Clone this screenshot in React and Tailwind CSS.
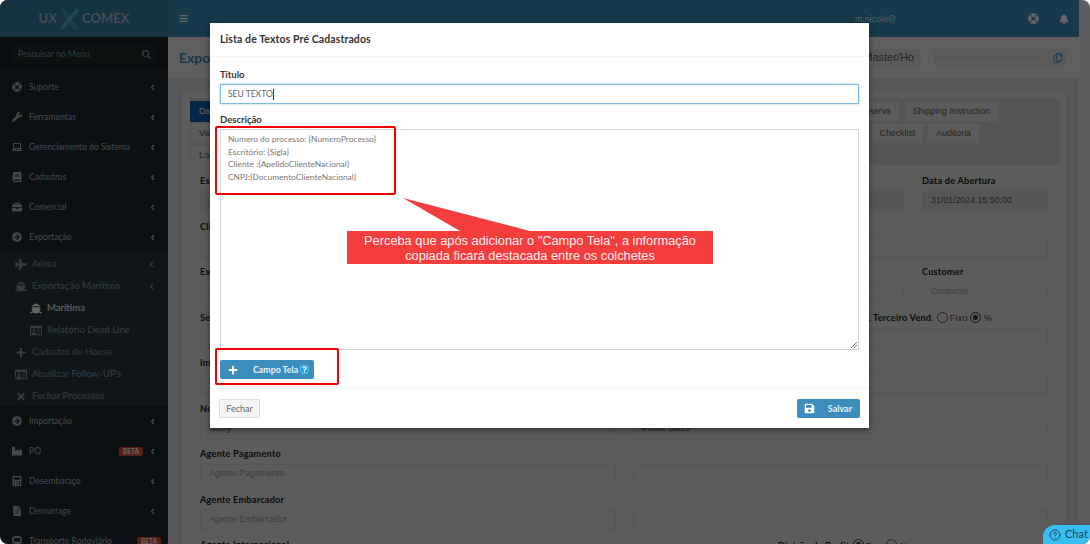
import { FaLifeRing, FaWrench, FaLaptop, FaBook, FaBriefcase, FaArrowCircleRight, FaPlane, FaShip, FaRegIdCard, FaPlus, FaTimes, FaIndustry, FaCalculator, FaFileAlt, FaBus, FaAngleLeft, FaSearch, FaBars, FaBell, FaSave, FaRegCopy, FaQuestionCircle } from 'react-icons/fa';
import { CircleHelp } from 'lucide-react';

const topMenu = [
    { label: 'Suporte', icon: FaLifeRing },
    { label: 'Ferramentas', icon: FaWrench },
    { label: 'Gerenciamento do Sistema', icon: FaLaptop },
    { label: 'Cadastros', icon: FaBook },
    { label: 'Comercial', icon: FaBriefcase },
    { label: 'Exportação', icon: FaArrowCircleRight },
];

const bottomMenu = [
    { label: 'Importação', icon: FaArrowCircleRight },
    { label: 'PO', icon: FaIndustry, beta: true },
    { label: 'Desembaraço', icon: FaCalculator },
    { label: 'Demurrage', icon: FaFileAlt },
    { label: 'Transporte Rodoviário', icon: FaBus, beta: true, noArrow: true },
];

const subMenu = [
    { label: 'Aérea', icon: FaPlane, arrow: true },
    { label: 'Exportação Marítima', icon: FaShip, arrow: true },
    { label: 'Marítima', icon: FaShip, nested: true, active: true },
    { label: 'Relatório Dead Line', icon: FaRegIdCard, nested: true },
    { label: 'Cadastro de House', icon: FaPlus },
    { label: "Atualizar Follow-UP's", icon: FaRegIdCard },
    { label: 'Fechar Processos', icon: FaTimes },
];

function MenuItem({ item }) {
    const Icon = item.icon;
    return (
        <div className="flex h-[30px] shrink-0 items-center pl-[12px] pr-[11px] text-[8.6px] whitespace-nowrap text-[#a8b6bd]">
            <Icon className="w-[10px] text-[10px]" />
            <span className="ml-[7px]">{item.label}</span>
            {item.beta && (
                <span className={`ml-auto rounded-[2px] bg-[#dd4b39] px-[4px] text-[6.5px] leading-[9px] font-bold text-white ${item.noArrow ? '-mr-[4px]' : 'mr-[5px]'}`}>BETA</span>
            )}
            {!item.noArrow && <FaAngleLeft className={`text-[9px] ${item.beta ? '' : 'ml-auto'}`} />}
        </div>
    );
}

function SubItem({ item }) {
    const Icon = item.icon;
    return (
        <div className={`flex h-[22px] shrink-0 items-center pr-[12px] text-[9.6px] whitespace-nowrap ${item.nested ? 'pl-[30px]' : 'pl-[15px]'} ${item.active ? 'text-white' : 'text-[#7f98a3]'}`}>
            <Icon className="w-[12px] text-[11px]" />
            <span className="ml-[5px]">{item.label}</span>
            {item.arrow && <FaAngleLeft className="ml-auto text-[9px]" />}
        </div>
    );
}

function Sidebar() {
    return (
        <aside className="flex w-[168px] shrink-0 flex-col bg-[#20292e]">
            <div className="flex h-[37px] shrink-0 items-center justify-center bg-[#367fa9] text-[13px] font-bold text-[#a5c0d0]">
                <span>UX</span>
                <svg width="25" height="22" viewBox="0 0 25 22">
                    <path d="M2 1h6l15 20h-6z" fill="#3fa0b8" />
                    <path d="M23 1h-4L2 21h5z" fill="#4fb8c8" />
                </svg>
                <span>COMEX</span>
            </div>
            <div className="flex h-[33px] shrink-0 items-center bg-[#1a2226] px-[10px] pt-[2px]">
                <div className="flex h-[18px] w-full items-center justify-between rounded-[2px] bg-[#1e282c] pl-[8px] pr-[7px] text-[8.6px] text-[#7f98a3]">
                    Pesquisar no Menu
                    <FaSearch className="text-[9px]" />
                </div>
            </div>
            <div className="flex flex-col pt-[2px]">
                {topMenu.map((item) => <MenuItem key={item.label} item={item} />)}
            </div>
            <div className="flex h-[154px] shrink-0 flex-col overflow-hidden bg-[#2a373d] pt-[1px]">
                {subMenu.map((item) => <SubItem key={item.label} item={item} />)}
            </div>
            <div className="flex flex-col">
                {bottomMenu.map((item) => <MenuItem key={item.label} item={item} />)}
            </div>
        </aside>
    );
}

function Field({ label, value, placeholder, disabled, labelExtra }) {
    return (
        <div className="flex h-[45.5px] min-w-0 flex-col">
            <div className="flex h-[15px] items-start whitespace-nowrap text-[9.2px] leading-[10px] font-bold tracking-[0.2px] text-[#222]">
                {labelExtra || label}
            </div>
            <div className={`flex h-[20px] items-center border border-[#d2d6de] px-[8px] text-[8.8px] font-['Liberation_Sans',sans-serif] ${disabled ? 'bg-[#d8d8d8]' : ''} ${value ? 'text-[#555]' : 'text-[#999]'}`}>
                {value || placeholder}
            </div>
        </div>
    );
}

function Radio({ checked }) {
    return (
        <span className={`h-[11px] w-[11px] shrink-0 -translate-y-[1px] rounded-full border ${checked ? 'border-[#333] p-[2px]' : 'border-[#555]'}`}>
            {checked && <span className="block h-full w-full rounded-full bg-[#333]" />}
        </span>
    );
}

function RadioLabel({ first, second, checked }) {
    return (
        <span className="ml-[3px] inline-flex items-center font-normal font-['Liberation_Sans',sans-serif] text-[#444]">
            <Radio checked={checked === 'first'} />
            <span className="ml-[2px] mr-[2px]">{first}</span>
            <Radio checked={checked === 'second'} />
            <span className="ml-[3px]">{second}</span>
        </span>
    );
}

function Tab({ children, active }) {
    return (
        <div className={`flex h-[21px] items-center border px-[8px] font-['Liberation_Sans',sans-serif] text-[8.8px] ${active ? 'border-[#0a5fb4] bg-[#0a5fb4] text-white' : 'border-[#d8d8d8] bg-[#e6e6e6] text-[#555]'}`}>
            {children}
        </div>
    );
}

function MainPage() {
    return (
        <div className="flex min-w-0 flex-1 flex-col">
            <header className="flex h-[37px] shrink-0 items-center bg-[#3c8dbc] pl-[11px] text-white">
                <FaBars className="text-[9px]" />
                <span className="ml-[667px] text-[9px] text-[#d5e6f0]">m.nicole@</span>
                <FaLifeRing className="ml-[133px] text-[11px]" />
                <FaBell className="ml-[20px] text-[10px]" />
            </header>
            <div className="flex h-[41px] shrink-0 items-center bg-[#eeeeee] pl-[11px]">
                <h1 className="text-[14px] font-bold text-[#3c8dbc]">Exportação Marítima</h1>
                <div className="ml-auto flex h-[18px] w-[62px] items-center justify-end bg-[#e2e2e2] pr-[7px] text-[11px] whitespace-nowrap text-[#555] font-['Liberation_Sans',sans-serif]">Master/Ho</div>
                <div className="ml-[12px] mr-[12px] flex h-[18px] w-[134px] items-center justify-between bg-[#e2e2e2] pl-[3px] pr-[4px]">
                    <div className="h-[2px] w-[108px] translate-y-[4px] bg-[#ededed]" />
                    <FaRegCopy className="text-[10px] text-[#3c8dbc]" />
                </div>
            </div>
            <div className="min-h-0 flex-1 bg-[#d8dcdf] pl-[12px] pr-[12px] pt-[12px]">
                <div className="h-[500px] border border-[#d2d2d2] bg-[#e6e6e6] pl-[9px] pr-[6px] pt-[7px]">
                    <div className="flex h-[67px] flex-col rounded-[2px] bg-[#d5d5d5] pt-[3px]">
                        <div className="flex justify-between pr-[61px]">
                            <Tab active>Dados Gerais</Tab>
                            <div className="flex gap-[4px]"><Tab>Reserva</Tab><Tab>Shipping Instruction</Tab></div>
                        </div>
                        <div className="mt-[1px] flex justify-between pr-[80px]">
                            <Tab>Valores</Tab>
                            <div className="flex gap-[3px]"><Tab>Checklist</Tab><Tab>Auditoria</Tab></div>
                        </div>
                        <div className="mt-[1px] flex"><Tab>Logs</Tab></div>
                    </div>
                    <div className="grid grid-cols-[416px_415px] gap-x-[17px] pl-[10px] pt-[11px]">
                        <div className="flex flex-col">
                            <Field label="Escritório" disabled />
                            <Field label="Cliente" placeholder="Cliente" />
                            <Field label="Exportador" placeholder="Exportador" />
                            <Field label="Serviço" placeholder="Serviço" />
                            <Field label="Importador" placeholder="Importador" />
                            <Field label="Notify" value="Notify" />
                            <Field label="Agente Pagamento" placeholder="Agente Pagamento" />
                            <Field label="Agente Embarcador" placeholder="Agente Embarcador" />
                            <Field label="Agente Internacional" placeholder="Agente Internacional" />
                        </div>
                        <div className="flex flex-col">
                            <div className="grid grid-cols-[271px_126px] gap-x-[18px]">
                                <Field label="Situação" disabled />
                                <Field label="Data de Abertura" value="31/01/2024 15:50:00" disabled />
                            </div>
                            <Field placeholder=" " />
                            <div className="grid grid-cols-[271px_126px] gap-x-[18px]">
                                <Field placeholder=" " />
                                <Field label="Customer" placeholder="Customer" />
                            </div>
                            <Field
                                value="0,00"
                                labelExtra={<span className="flex items-center pl-[216px]">Com. Terceiro Vend.<RadioLabel first="Fixo" second="%" checked="second" /></span>}
                            />
                            <Field placeholder=" " />
                            <Field value="Inside Sales" />
                            <Field placeholder=" " />
                            <Field placeholder=" " />
                            <Field
                                placeholder=" "
                                labelExtra={<span className="flex items-center pl-[145px]">Divisão de Profit<RadioLabel first="Fixo" second="%" checked="first" /></span>}
                            />
                        </div>
                    </div>
                </div>
            </div>
        </div>
    );
}

function Modal() {
    return (
        <div className="absolute left-[210px] top-[23px] flex h-[405px] w-[659px] flex-col bg-white text-[#333] shadow-[0_2px_6px_rgba(0,0,0,0.5)]">
            <div className="flex h-[34px] shrink-0 items-center border-b border-[#f4f4f4] pl-[10px] pt-[1px] text-[10.5px] font-bold tracking-[0.1px]">
                Lista de Textos Pré Cadastrados
            </div>
            <div className="flex flex-1 flex-col px-[10px] pt-[10px]">
                <label className="mb-[2px] h-[15px] text-[9.5px] leading-[15px] font-bold">Título</label>
                <div className="flex h-[20px] items-center border border-[#7fb8d8] px-[7px] text-[8.5px] text-[#666] shadow-[0_0_2px_rgba(60,141,188,0.5)]">
                    SEU TEXTO<span className="h-[11px] w-px bg-[#333]" />
                </div>
                <label className="mb-[2px] mt-[8px] h-[15px] text-[9.5px] leading-[15px] font-bold">Descrição</label>
                <div className="relative h-[221px] border border-[#d2d6de] px-[7px] pt-[3px] text-[8.4px] leading-[12.6px] text-[#777]">
                    <p>Numero do processo: {'{NumeroProcesso}'}</p>
                    <p>Escritório: {'{Sigla}'}</p>
                    <p>Cliente :{'{ApelidoClienteNacional}'}</p>
                    <p>CNPJ:{'{DocumentoClienteNacional}'}</p>
                    <svg width="6" height="6" viewBox="0 0 6 6" className="absolute bottom-[1px] right-[1px]">
                        <path d="M0 6L6 0M3 6L6 3" stroke="#555" strokeWidth="0.8" />
                    </svg>
                </div>
                <div className="mt-[10px] flex h-[19px] w-[94px] items-center rounded-[2px] bg-[#3c8dbc] pl-[8px] text-[8.8px] font-bold text-[#e6f2f8]">
                    <FaPlus className="text-[10px] text-white" />
                    <span className="ml-[15px]">Campo Tela</span>
                    <span className="ml-[2px] flex h-[9px] w-[9px] items-center justify-center rounded-full bg-white">
                        <FaQuestionCircle className="text-[9px] text-[#12a8f0]" />
                    </span>
                </div>
            </div>
            <div className="flex h-[40px] shrink-0 items-center justify-between border-t border-[#f4f4f4] pl-[9px] pr-[9px]">
                <button className="flex h-[19px] w-[41px] items-center justify-center rounded-[2px] border border-[#ddd] bg-[#f4f4f4] text-[9px] text-[#666]">Fechar</button>
                <button className="flex h-[19px] w-[63px] items-center justify-between rounded-[2px] bg-[#3c8dbc] pl-[7px] pr-[8px] text-[9px] font-bold text-[#e6f2f8]">
                    <FaSave className="text-[11px] text-white" />
                    Salvar
                </button>
            </div>
        </div>
    );
}

function Annotations() {
    return (
        <>
            <div className="absolute left-[215px] top-[126px] h-[69px] w-[181px] rounded-[2px] border-2 border-[#f00000]" />
            <div className="absolute left-[215px] top-[348px] h-[37px] w-[124px] rounded-[2px] border-2 border-[#f00000]" />
            <svg width="140" height="36" viewBox="0 0 140 36" className="absolute left-[400px] top-[197px]">
                <path d="M3 1L130 34H60z" fill="#f43e3e" />
            </svg>
            <div className="absolute left-[347px] top-[231px] flex h-[33px] w-[366px] items-center justify-center bg-[#f43e3e] text-center font-['Liberation_Sans',sans-serif] text-[12.8px] leading-[15px] text-[#ffecec]">
                <p>Perceba que após adicionar o "Campo Tela", a informação<br />copiada ficará destacada entre os colchetes</p>
            </div>
        </>
    );
}

export default function App() {
    return (
        <div className="h-[544px] w-[1090px] overflow-hidden bg-white font-['Lato',sans-serif]">
            <div className="relative flex h-full w-full overflow-hidden rounded-[8px]">
                <Sidebar />
                <MainPage />
                <div className="w-[11px] shrink-0 bg-[#e8e8e8]" />

                {/* fundo escuro do modal */}
                <div className="absolute inset-0 bg-black/60" />
                <Modal />
                <Annotations />

                <div className="absolute bottom-0 right-0 flex h-[19px] w-[47px] items-center gap-[4px] rounded-tl-[12px] bg-[#38bff0] pl-[6px] text-[11px] text-[#16465f]">
                    <CircleHelp className="h-[12px] w-[12px] shrink-0" />
                    <span>Chat</span>
                </div>
            </div>
        </div>
    );
}
